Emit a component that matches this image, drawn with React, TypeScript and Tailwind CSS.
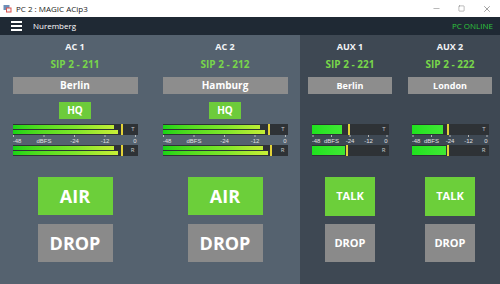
import { Minus, Square, X } from "lucide-react";

type Level = { a: number; b: number; peak: number };

const acChannels = [
  {
    title: "AC 1",
    sip: "SIP 2 - 211",
    name: "Berlin",
    t: { a: 101, b: 105, peak: 108 },
    r: { a: 101, b: 105, peak: 108 },
  },
  {
    title: "AC 2",
    sip: "SIP 2 - 212",
    name: "Hamburg",
    t: { a: 97, b: 102, peak: 105 },
    r: { a: 100, b: 105, peak: 107 },
  },
];

const auxChannels = [
  {
    title: "AUX 1",
    sip: "SIP 2 - 221",
    name: "Berlin",
    t: { a: 30, b: 30, peak: 36 },
    r: { a: 33, b: 33, peak: 34 },
  },
  {
    title: "AUX 2",
    sip: "SIP 2 - 222",
    name: "London",
    t: { a: 31, b: 31, peak: 35 },
    r: { a: 34, b: 34, peak: 35 },
  },
];

const font = { fontFamily: "'Open Sans', 'Noto Sans', sans-serif" };

function MeterBar({
  width,
  level,
  label,
  single,
}: {
  width: number;
  level: Level;
  label: string;
  single?: boolean;
}) {
  return (
    <div className="relative flex h-[11px] flex-col gap-px bg-[#2e3236] py-px" style={{ width }}>
      {single ? (
        <div
          className="h-[9px] bg-gradient-to-r from-[#1ee21e] to-[#3fe834]"
          style={{ width: level.a }}
        />
      ) : (
        [level.a, level.b].map((w, i) => (
          <div key={i} className="h-[4px] overflow-hidden" style={{ width: w }}>
            <div
              className="h-full bg-gradient-to-r from-[#16d416] via-[#7ee62a] to-[#e6f23c]"
              style={{ width }}
            />
          </div>
        ))
      )}
      <div
        className="absolute top-0 h-full w-[2px] bg-[#e3d238]"
        style={{ left: level.peak }}
      />
      <span className="absolute right-[3px] top-0 text-[6px] leading-[11px] text-[#c8c8c8]">
        {label}
      </span>
    </div>
  );
}

function Scale({ width, step, start }: { width: number; step: number; start: number }) {
  const labels = ["-48", "dBFS", "-24", "-12", "0"];
  return (
    <svg width={width} height={10} className="block">
      {labels.map((l, i) => {
        const x = start + step * i;
        return (
          <g key={l}>
            <line x1={x} y1={0} x2={x} y2={2} stroke="#d0d0d0" strokeWidth={0.8} />
            <text
              x={Math.min(Math.max(x, 4), width - 3)}
              y={8}
              fontSize={6}
              fill="#e0e0e0"
              textAnchor="middle"
              fontFamily="'Liberation Sans', sans-serif"
            >
              {l}
            </text>
          </g>
        );
      })}
    </svg>
  );
}

function Meter({
  width,
  t,
  r,
  step,
  start,
  single,
}: {
  width: number;
  t: Level;
  r: Level;
  step: number;
  start: number;
  single?: boolean;
}) {
  return (
    <div className="mt-[5px] flex flex-col">
      <MeterBar width={width} level={t} label="T" single={single} />
      <Scale width={width} step={step} start={start} />
      <MeterBar width={width} level={r} label="R" single={single} />
    </div>
  );
}

function Header({ title, sip }: { title: string; sip: string }) {
  return (
    <>
      <div className="pt-[6px] text-[9px] font-bold leading-[12px] text-[#f2f4f6]">{title}</div>
      <div className="mt-[5px] text-[10px] font-bold leading-[12px] text-[#78d64a]">{sip}</div>
    </>
  );
}

export default function App() {
  return (
    <div className="flex h-[284px] w-[500px] flex-col overflow-hidden" style={font}>
      <div className="flex h-[17px] items-center bg-white pl-[3px] pr-[8px]">
        <svg width="9" height="9" viewBox="0 0 9 9">
          <rect x="0.5" y="1" width="6" height="5" fill="#6c8fb8" />
          <rect x="3" y="3.5" width="5.5" height="5" fill="#d9534f" />
          <rect x="4" y="4.5" width="3.5" height="3" fill="#f3f3f3" />
        </svg>
        <span className="ml-[4px] text-[8px] text-[#222]">PC 2 : MAGIC ACip3</span>
        <div className="ml-auto flex items-center gap-[17px] text-[#444]">
          <Minus size={9} strokeWidth={1} />
          <Square size={7} strokeWidth={1.2} />
          <X size={10} strokeWidth={1.2} />
        </div>
      </div>

      <div className="flex h-[18px] items-center bg-[#1f2934] pl-[11px] pr-[7px]">
        <div className="flex w-[11px] flex-col gap-[2px]">
          <span className="h-[2px] bg-white" />
          <span className="h-[2px] bg-white" />
          <span className="h-[2px] bg-white" />
        </div>
        <span className="ml-[11px] text-[8px] text-white">Nuremberg</span>
        <span className="ml-auto text-[8px] text-[#2ec53c]">PC ONLINE</span>
      </div>

      <div className="flex flex-1">
        <div className="grid w-[300px] grid-cols-2 bg-[#55626f]">
          {acChannels.map((c) => (
            <div key={c.title} className="flex flex-col items-center">
              <Header title={c.title} sip={c.sip} />
              <div className="mt-[7px] flex h-[17px] w-[125px] items-center justify-center bg-[#8d8d8d] text-[10px] font-bold text-white">
                {c.name}
              </div>
              <div className="mt-[8px] flex h-[17px] w-[32px] items-center justify-center bg-[#6dcb3b] text-[10px] font-bold text-white">
                HQ
              </div>
              <Meter width={125} t={c.t} r={c.r} step={30.5} start={0.5} />
              <div className="mt-[21px] flex h-[38px] w-[75px] items-center justify-center bg-[#6ccf3a] text-[18px] font-bold text-white">
                AIR
              </div>
              <div className="mt-[9px] flex h-[38px] w-[75px] items-center justify-center bg-[#8a8a8a] text-[18px] font-bold text-white">
                DROP
              </div>
            </div>
          ))}
        </div>

        <div className="grid w-[200px] grid-cols-2 bg-[#3e4853]">
          {auxChannels.map((c) => (
            <div key={c.title} className="flex flex-col items-center">
              <Header title={c.title} sip={c.sip} />
              <div className="mt-[7px] flex h-[17px] w-[84px] items-center justify-center bg-[#8d8d8d] text-[9px] font-bold text-white">
                {c.name}
              </div>
              <div className="invisible mt-[8px] h-[17px]" />
              <Meter width={77} t={c.t} r={c.r} step={18.5} start={1} single />
              <div className="mt-[21px] flex h-[39px] w-[50px] items-center justify-center bg-[#6ccf3a] text-[11px] font-bold text-white">
                TALK
              </div>
              <div className="mt-[8px] flex h-[38px] w-[50px] items-center justify-center bg-[#8a8a8a] text-[11px] font-bold text-white">
                DROP
              </div>
            </div>
          ))}
        </div>
      </div>
    </div>
  );
}
